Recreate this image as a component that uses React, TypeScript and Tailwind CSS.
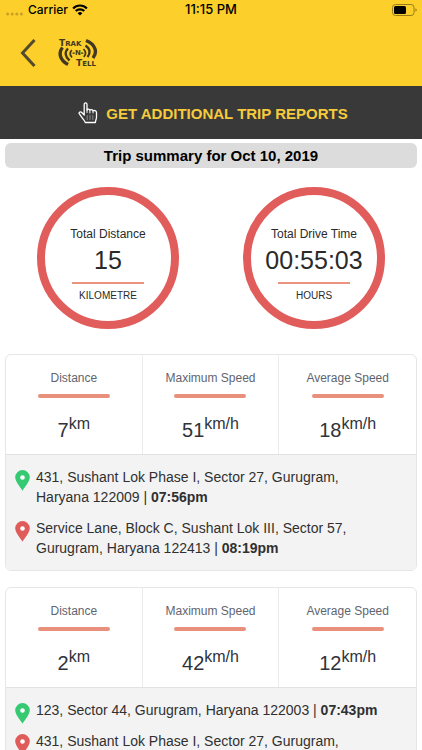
import { ReactNode } from 'react';

type Stop = {
  address: string;
  time: string;
};

type Trip = {
  distance: number;
  maxSpeed: number;
  avgSpeed: number;
  start: Stop;
  end: Stop;
};

const trips: Trip[] = [
  {
    distance: 7,
    maxSpeed: 51,
    avgSpeed: 18,
    start: { address: '431, Sushant Lok Phase I, Sector 27, Gurugram, Haryana 122009', time: '07:56pm' },
    end: { address: 'Service Lane, Block C, Sushant Lok III, Sector 57, Gurugram, Haryana 122413', time: '08:19pm' },
  },
  {
    distance: 2,
    maxSpeed: 42,
    avgSpeed: 12,
    start: { address: '123, Sector 44, Gurugram, Haryana 122003', time: '07:43pm' },
    end: { address: '431, Sushant Lok Phase I, Sector 27, Gurugram,', time: '' },
  },
];

function StatusBar() {
  return (
    <div className="grid grid-cols-3 items-center h-5 px-[5px] font-medium text-black font-[Inter,sans-serif]">
      <div className="flex items-center">
        <svg className="mt-2" width="18" height="4" viewBox="0 0 18 4" fill="#c99f22">
          <circle cx="2.6" cy="2" r="1.5" />
          <circle cx="7.2" cy="2" r="1.5" />
          <circle cx="11.8" cy="2" r="1.5" />
          <circle cx="16.4" cy="2" r="1.5" />
        </svg>
        <span className="ml-[5px] text-xs">Carrier</span>
        <svg className="ml-1" width="16" height="12" viewBox="0 0 16 12" fill="none" stroke="#000">
          <path d="M1.1 4.4a9.8 9.8 0 0 1 13.8 0" strokeWidth="2.1" />
          <path d="M3.7 7.1a6.1 6.1 0 0 1 8.6 0" strokeWidth="2.1" />
          <path d="M8 11.6 5.6 9.2a3.4 3.4 0 0 1 4.8 0Z" fill="#000" stroke="none" />
        </svg>
      </div>
      <span className="text-center text-[13px]">11:15 PM</span>
      <svg className="justify-self-end" width="25" height="12" viewBox="0 0 25 12">
        <rect x="0.5" y="0.5" width="21.5" height="11" rx="3" fill="none" stroke="#9a7c19" />
        <rect x="2" y="2" width="12" height="8" rx="1.5" fill="#000" />
        <path d="M23.4 4.2q1.4.6 1.4 1.8t-1.4 1.8Z" fill="#9a7c19" />
      </svg>
    </div>
  );
}

function Logo() {
  return (
    <svg width="40" height="30" viewBox="0 0 40 30" fill="none" stroke="#42381f" role="img" aria-label="Trak N Tell">
      <path d="M4.5 9.5C.2 14.5 1.6 22 10 26.5" strokeWidth="3.4" />
      <path d="M10 10.5C6.5 14 7 18.5 11.5 22.5" strokeWidth="2.4" />
      <path d="M13.8 12C11.6 14.5 11.8 17 14 19.5" strokeWidth="1.7" />
      <path d="M28 2.5C38 6.5 39.5 14.5 35 20" strokeWidth="3.4" />
      <path d="M27.5 7.5C32.5 11 32.5 15.5 29.5 19" strokeWidth="2.4" />
      <path d="M25.5 11C28 13.5 28 16.5 25.8 19" strokeWidth="1.7" />
      <path d="M14.5 15.2h2.3M23 15.2h2.3" strokeWidth="1.2" />
      <g className="font-['DejaVu_Sans',sans-serif] font-bold" fill="#42381f" stroke="none">
        <text x="1" y="8" fontSize="9">
          T<tspan fontSize="7">RAK</tspan>
        </text>
        <text x="17" y="17" fontSize="7">N</text>
        <text x="18" y="28" fontSize="9">
          T<tspan fontSize="7">ELL</tspan>
        </text>
      </g>
    </svg>
  );
}

function HandIcon() {
  return (
    <svg width="20" height="22" viewBox="0 0 20 22" fill="none" stroke="#fff" strokeWidth="1.3" strokeLinejoin="round" strokeLinecap="round">
      <path d="M6.2 13V2.4C6.2.4 9 .4 9 2.4V8C9.3 6.7 11.7 6.8 11.9 8.2 12.5 7.2 14.7 7.4 15 8.9 16 8.1 18.5 8.6 18.5 10.6V15C18.5 17 17.6 17.8 17.4 20.5H7.2C6.9 18.5 4.5 17 3.5 14.8L1.2 11.6C.5 10.2 2.6 9.3 3.8 10.5Z" />
      <path d="M9 8v2.5M11.9 8.5v2.5M15 9v2" strokeWidth="1" />
      <path d="M9.2 13.5v4M12 13.5v4M14.8 13.5v4" stroke="#8a8a8a" strokeWidth="1" />
    </svg>
  );
}

function Pin({ start }: { start?: boolean }) {
  return (
    <svg className="shrink-0 mt-[3px] -mb-1" width="15" height="21" viewBox="0 0 15 21" aria-hidden="true">
      <path
        d="M7.5 0A7.3 7.3 0 0 0 .2 7.3C.2 11.5 5 16.5 7.5 20.8 10 16.5 14.8 11.5 14.8 7.3A7.3 7.3 0 0 0 7.5 0Z"
        fill={start ? '#35c971' : '#e05c5b'}
      />
      <circle cx="7.5" cy="7.5" r="2.3" fill="#fff" />
    </svg>
  );
}

function SummaryCircle({ title, value, unit }: { title: string; value: string; unit: string }) {
  return (
    <div className="flex flex-col items-center size-[142px] pt-[31px] rounded-full border-8 border-[#e15d5c] text-[#2a2a2a]">
      <span className="text-xs leading-4">{title}</span>
      <span className="mt-1 text-[25px] leading-7">{value}</span>
      <span className="mt-2 w-18 h-0.5 bg-[#ea937f]" />
      <span className="mt-1 text-[10px] leading-4">{unit}</span>
    </div>
  );
}

function Stat({ label, unit, children }: { label: string; unit: string; children: ReactNode }) {
  return (
    <div className="flex flex-col items-center pt-[15px]">
      <span className="text-xs leading-4 text-[#5f6570]">{label}</span>
      <span className="mt-2 w-18 h-1 rounded-full bg-[#e8907b]" />
      <span className="mt-5 text-xl leading-6 text-[#2f333b]">
        {children}
        <sup className="text-base">{unit}</sup>
      </span>
    </div>
  );
}

function StopRow({ stop, start }: { stop: Stop; start?: boolean }) {
  return (
    <li className="flex gap-1.5">
      <Pin start={start} />
      {stop.time ? (
        <p>
          {`${stop.address} | `}
          <strong>{stop.time}</strong>
        </p>
      ) : (
        <p>{stop.address}</p>
      )}
    </li>
  );
}

function TripCard({ trip }: { trip: Trip }) {
  return (
    <article className="rounded-md border border-[#e6e6e6] overflow-hidden">
      <div className="grid grid-cols-3 h-[100px] divide-x divide-[#ececec] border-b border-b-[#e2e2e2]">
        <Stat label="Distance" unit="km">{trip.distance}</Stat>
        <Stat label="Maximum Speed" unit="km/h">{trip.maxSpeed}</Stat>
        <Stat label="Average Speed" unit="km/h">{trip.avgSpeed}</Stat>
      </div>
      <ul className="flex flex-col gap-[11px] pl-[9px] pr-7 py-3 bg-[#f3f3f3] text-sm leading-5 text-[#303030]">
        <StopRow stop={trip.start} start />
        <StopRow stop={trip.end} />
      </ul>
    </article>
  );
}

export default function App() {
  return (
    <div className="flex flex-col h-screen overflow-hidden bg-white font-['Liberation_Sans',Arial,sans-serif]">
      <header className="shrink-0 h-[86px] bg-[#fccf2b]">
        <StatusBar />
        <div className="flex items-center gap-[22px] pt-[18px] pl-5">
          <button type="button" aria-label="Back">
            <svg width="16" height="28" viewBox="0 0 16 28" fill="none" stroke="#544a2c" strokeWidth="3">
              <path d="M14.5 1 2.5 14l12 13" />
            </svg>
          </button>
          <Logo />
        </div>
      </header>

      <button
        type="button"
        className="shrink-0 flex items-center justify-center gap-2 h-[53px] pl-1 bg-[#393939] text-[15px] font-bold text-[#f5cb3c]"
      >
        <HandIcon />
        <span className="pt-1">GET ADDITIONAL TRIP REPORTS</span>
      </button>

      <main className="flex-1 min-h-0 overflow-hidden px-[5px] pt-1">
        <h1 className="rounded-md bg-[#dcdcdc] pt-px text-center text-[15px] leading-6 font-bold text-black">
          Trip summary for Oct 10, 2019
        </h1>

        <section className="grid grid-cols-2 justify-items-center pt-[19px] pb-[25px]">
          <SummaryCircle title="Total Distance" value="15" unit="KILOMETRE" />
          <SummaryCircle title="Total Drive Time" value="00:55:03" unit="HOURS" />
        </section>

        <section className="flex flex-col gap-4">
          {trips.map((trip) => (
            <TripCard key={trip.start.time} trip={trip} />
          ))}
        </section>
      </main>
    </div>
  );
}
